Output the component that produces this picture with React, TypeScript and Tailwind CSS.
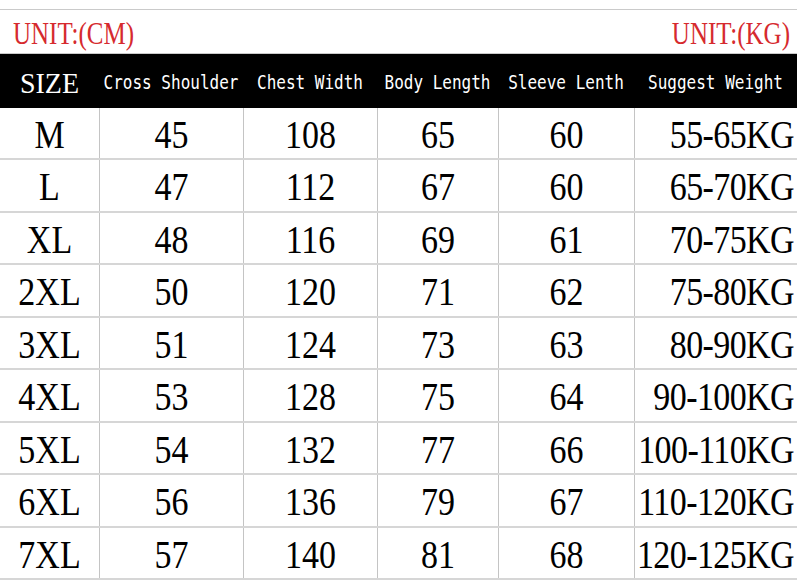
import React from 'react';

const serif = "font-['Liberation_Serif','Times_New_Roman',serif]";
const mono = "font-['DejaVu_Sans_Mono','Liberation_Mono',monospace]";

const rows = [
  ['M', '45', '108', '65', '60', '55-65KG'],
  ['L', '47', '112', '67', '60', '65-70KG'],
  ['XL', '48', '116', '69', '61', '70-75KG'],
  ['2XL', '50', '120', '71', '62', '75-80KG'],
  ['3XL', '51', '124', '73', '63', '80-90KG'],
  ['4XL', '53', '128', '75', '64', '90-100KG'],
  ['5XL', '54', '132', '77', '66', '100-110KG'],
  ['6XL', '56', '136', '79', '67', '110-120KG'],
  ['7XL', '57', '140', '81', '68', '120-125KG'],
];

const headers = ['Cross Shoulder', 'Chest Width', 'Body Length', 'Sleeve Lenth', 'Suggest Weight'];

const cols = 'grid grid-cols-[99px_144px_134px_121px_136px_163px]';

const Cell = ({ children, first, last }: { children: React.ReactNode; first?: boolean; last?: boolean }) => (
  <div
    className={
      'flex h-full items-center overflow-visible whitespace-nowrap ' +
      (first ? '' : 'border-l border-[#c4c4c4] ') +
      (last ? 'justify-end pr-[3px] tracking-[-0.6px]' : 'justify-center')
    }
  >
    <span className={`inline-block scale-y-[1.15] pt-[3px] text-[34px] leading-none text-black ${serif}`}>
      {children}
    </span>
  </div>
);

export default function App() {
  return (
    <div className="h-[583px] w-[797px] overflow-hidden bg-white">
      <div className="h-[9px]" />
      {/* units */}
      <div className={`flex h-[45px] items-center justify-between border-y border-[#cacaca] pl-[13px] pr-[7px] pt-[4px] text-[25px] leading-none text-[#d62a2e] ${serif}`}>
        <span className="inline-block scale-y-[1.27]">UNIT:(CM)</span>
        <span className="inline-block scale-y-[1.27]">UNIT:(KG)</span>
      </div>

      {/* header */}
      <div className={`${cols} h-[54px] items-center bg-black text-white`}>
        <div className={`flex justify-center pt-[4px] text-[28px] leading-none ${serif}`}>
          <span className="inline-block scale-y-[1.08]">SIZE</span>
        </div>
        {headers.map((h) => (
          <div key={h} className={`flex justify-center whitespace-nowrap pt-[4px] text-[16px] leading-none ${mono}`}>
            <span className="inline-block scale-y-[1.2]">{h}</span>
          </div>
        ))}
      </div>

      {/* rows */}
      {rows.map((r, i) => (
        <div key={r[0]} className={`${cols} ${i % 2 === 0 ? 'h-[52px]' : 'h-[53px]'} border-b-2 border-[#d6d6d6]`}>
          {r.map((v, j) => (
            <Cell key={j} first={j === 0} last={j === 5}>
              {v}
            </Cell>
          ))}
        </div>
      ))}

      {/* red note, mostly below the fold */}
      <div className="flex gap-[60px] whitespace-nowrap pl-[28px] pt-[1px] font-['Noto_Sans_CJK_SC',sans-serif] text-[30px] leading-none text-[#e0204a]">
        <span>卜</span>
        <span>״ 温馨提示</span>
        <span>手工测量</span>
        <span>存在误差</span>
      </div>
    </div>
  );
}
